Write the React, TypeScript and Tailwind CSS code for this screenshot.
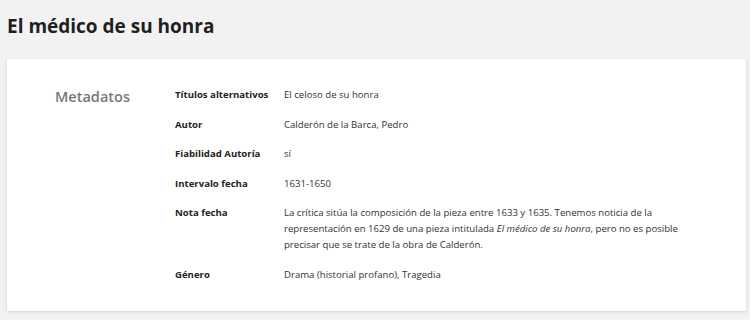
const rows: { label: string; value: React.ReactNode }[] = [
  { label: "Títulos alternativos", value: "El celoso de su honra" },
  { label: "Autor", value: "Calderón de la Barca, Pedro" },
  { label: "Fiabilidad Autoría", value: "sí" },
  { label: "Intervalo fecha", value: "1631-1650" },
  {
    label: "Nota fecha",
    value: (
      <>
        La crítica sitúa la composición de la pieza entre 1633 y 1635. Tenemos noticia de la representación en 1629
        de una pieza intitulada <em>El médico de su honra</em>, pero no es posible precisar que se trate de la obra de
        Calderón.
      </>
    ),
  },
  { label: "Género", value: "Drama (historial profano), Tragedia" },
];

export default function App() {
  return (
    <div className="min-h-[320px] w-[750px] bg-[#f2f2f2] px-[7px] pt-[12px] font-['Open_Sans',sans-serif]">
      <h1 className="text-[19px] font-bold leading-[28px] text-[#1f1f1f]">El médico de su honra</h1>

      <div className="mt-[19px] w-[739px] bg-white pt-[28px] pb-[28px] pl-[48px] pr-[40px] shadow-[0_1px_3px_rgba(0,0,0,0.15)]">
        <div className="flex">
          <h2 className="w-[120px] shrink-0 text-[14.5px] font-semibold leading-[20px] text-[#777]">Metadatos</h2>
          <div className="flex flex-1 flex-col gap-[13.5px]">
            {rows.map((r) => (
              <div key={r.label} className="flex text-[9.6px] leading-[16px]">
                <div className="w-[109px] shrink-0 font-bold text-[#222]">{r.label}</div>
                <div className="flex-1 text-[#333]">{r.value}</div>
              </div>
            ))}
          </div>
        </div>
      </div>
    </div>
  );
}
